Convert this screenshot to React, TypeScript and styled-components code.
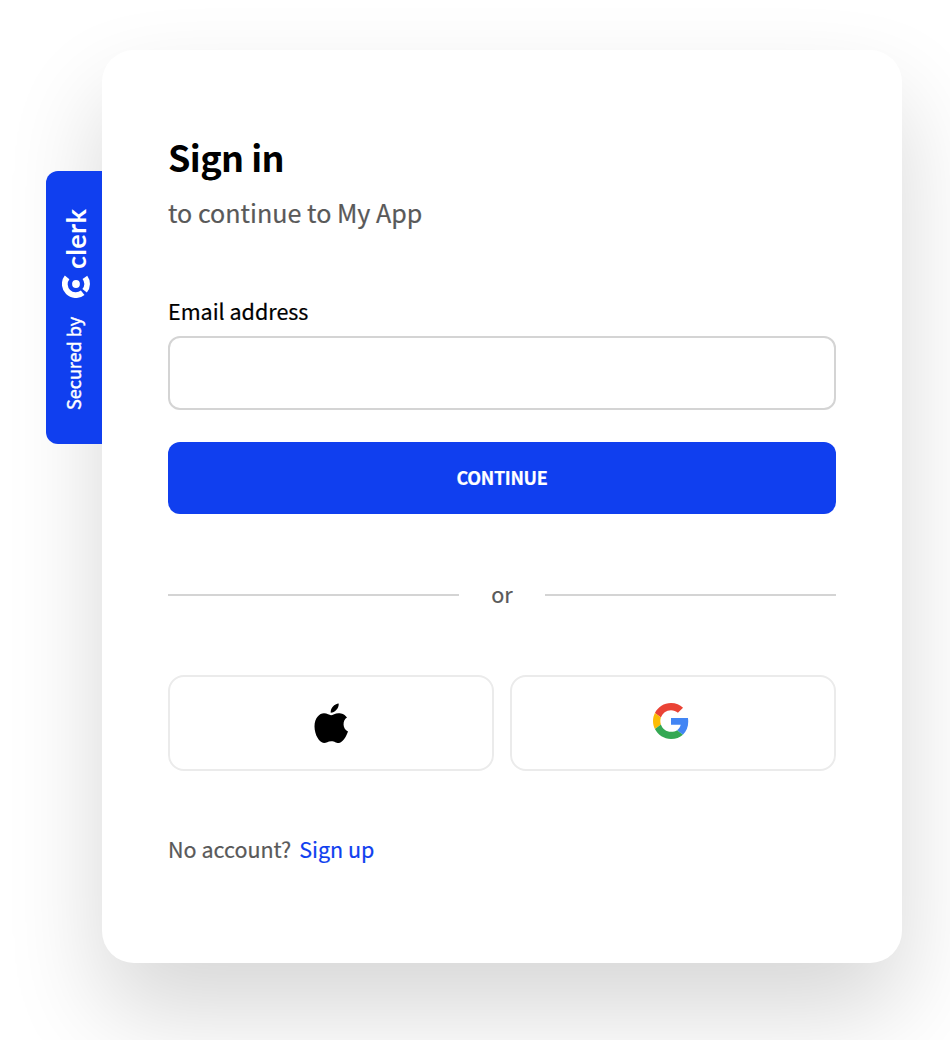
import React from "react";
import styled, { createGlobalStyle } from "styled-components";

const GlobalStyle = createGlobalStyle`
  *, *::before, *::after { box-sizing: border-box; }
  body {
    margin: 0;
    background: #fff;
    overflow: hidden;
    font-family: "Noto Sans CJK SC", "Open Sans", sans-serif;
    -webkit-text-stroke: 0.2px currentColor;
  }
`;

const Page = styled.main`
  display: flex;
  align-items: flex-start;
  height: 1040px;
  padding: 50px 0 0 46px;
  overflow: hidden;
`;

const SecuredTab = styled.aside`
  position: relative;
  z-index: 1;
  display: flex;
  flex-direction: row-reverse;
  align-items: center;
  justify-content: flex-end;
  width: 56px;
  height: 273px;
  margin-top: 121px;
  padding: 35px 0 34px;
  background: #103fef;
  border-radius: 12px 0 0 12px;
  color: #fff;
  writing-mode: vertical-rl;
`;

const TabContent = styled.div`
  display: flex;
  align-items: center;
  width: 56px;
  height: 204px;
  transform: rotate(180deg);
`;

const SecuredText = styled.span`
  margin-left: 2px;
  font-size: 18px;
  line-height: 24px;
  white-space: nowrap;
  -webkit-text-stroke: 0.4px currentColor;
`;

const TabLogo = styled.svg`
  display: block;
  flex: none;
  width: 28px;
  height: 24px;
  margin: 19px 4px 0 0;
  transform: rotate(180deg);
`;

const Wordmark = styled.span`
  margin: 5px 4px 0 0;
  font-family: Lato, sans-serif;
  font-size: 27px;
  font-weight: 700;
  letter-spacing: 0.3px;
  line-height: 28px;
  -webkit-text-stroke: 0;
`;

const Card = styled.section`
  display: flex;
  flex-direction: column;
  width: 800px;
  height: 913px;
  flex: none;
  padding: 86px 66px 0;
  background: #fff;
  border-radius: 32px;
  box-shadow: 0 48px 96px rgba(0, 0, 0, 0.16);
`;

const Title = styled.h1`
  margin: 0;
  font-size: 36px;
  font-weight: 600;
  letter-spacing: -0.6px;
  line-height: 40px;
  color: #000;
  -webkit-text-stroke: 0;
`;

const Subtitle = styled.p`
  margin: 21px 0 0;
  font-size: 25.1px;
  line-height: 30px;
  color: #595959;
`;

const Field = styled.label`
  display: flex;
  flex-direction: column;
  gap: 12px;
  margin-top: 71px;
  font-size: 21.5px;
  line-height: 26px;
  color: #000;
`;

const Input = styled.input`
  width: 100%;
  height: 74px;
  padding: 0 24px;
  border: 2px solid #d4d4d4;
  border-radius: 12px;
  background: #fff;
  font: inherit;
  outline: none;
`;

const ContinueButton = styled.button`
  height: 72px;
  margin-top: 32px;
  padding: 0 0 2px;
  border: 0;
  border-radius: 12px;
  background: #103fef;
  color: #fff;
  font-family: inherit;
  font-size: 18px;
  font-weight: 600;
  letter-spacing: -0.35px;
  line-height: 24px;
`;

const Divider = styled.div`
  display: flex;
  align-items: center;
  gap: 32px;
  height: 26px;
  margin-top: 68px;
  color: #595959;

  &::before,
  &::after {
    content: "";
    flex: 1;
    height: 2px;
    background: #d4d4d4;
  }
`;

const DividerText = styled.span`
  padding-bottom: 2px;
  font-size: 21.6px;
  line-height: 24px;
`;

const Providers = styled.div`
  display: grid;
  grid-template-columns: 1fr 1fr;
  gap: 16px;
  margin-top: 67px;
`;

const ProviderButton = styled.button`
  display: flex;
  align-items: center;
  justify-content: center;
  height: 96px;
  padding: 0;
  border: 2px solid #ebebeb;
  border-radius: 16px;
  background: #fff;
`;

const GoogleLogo = styled.svg`
  width: 36px;
  height: 36px;
  margin: 0 4px 4px 0;
`;

const Footer = styled.p`
  display: flex;
  gap: 8px;
  margin: 64px 0 0;
  font-size: 21.5px;
  line-height: 28px;
  color: #595959;
`;

const SignUpLink = styled.a`
  color: #103fef;
  text-decoration: none;
`;

const AppleIcon = () => (
  <svg width="34" height="41" viewBox="0 0 34 41" aria-hidden="true">
    <path d="M17 12.200c1.600 0 4.300-2 7.500-2 1.200 0 5.600.1 8.500 4.300-4.900 3-4.500 11.500 1 14-1.600 4.600-5.300 11.500-9.500 11.500-2.700 0-3.600-1.800-7.200-1.800-3.600 0-4.700 1.800-7.300 1.800C5.500 40 .5 32 .5 23.600c0-8.600 5-13.300 9.500-13.300 3.200 0 5.300 1.900 7 1.900zM16.700 9.800C16.400 5 20.500.8 24.700.5c.4 4.700-3.700 9.200-8 9.300z" fill="#000" />
  </svg>
);

const GoogleIcon = () => (
  <GoogleLogo viewBox="0 0 48 48" aria-hidden="true">
    <path fill="#EA4335" d="M24 9.500c3.540 0 6.710 1.220 9.210 3.600l6.850-6.850C35.900 2.380 30.470 0 24 0 14.620 0 6.510 5.380 2.560 13.220l7.980 6.190C12.430 13.720 17.740 9.500 24 9.500z" />
    <path fill="#4285F4" d="M46.980 24.550c0-1.570-.15-3.090-.38-4.550H24v9.020h12.940c-.58 2.960-2.260 5.480-4.780 7.180l7.730 6c4.510-4.180 7.090-10.360 7.090-17.650z" />
    <path fill="#FBBC05" d="M10.530 28.590c-.48-1.450-.76-2.990-.76-4.590s.27-3.140.76-4.590l-7.980-6.190C.92 16.460 0 20.120 0 24s.92 7.540 2.560 10.780z" />
    <path fill="#34A853" d="M24 48c6.480 0 11.930-2.130 15.890-5.810l-7.730-6c-2.150 1.450-4.920 2.300-8.160 2.300-6.260 0-11.570-4.220-13.470-9.910l-7.980 6.190C6.510 42.620 14.620 48 24 48z" />
  </GoogleLogo>
);

const ClerkMark = () => (
  <TabLogo viewBox="0 0 28 24" aria-hidden="true">
    <g fill="none" stroke="#fff" strokeWidth="5.800">
      <path d="M5.100 3.400A11 11 0 0 0 20.700 18.700" />
      <path d="M22.600 16.800A11 11 0 0 0 22.900 3.400" />
    </g>
    <circle cx="14" cy="10" r="3.900" fill="#fff" />
  </TabLogo>
);

export default function App() {
  return (
    <>
      <GlobalStyle />
      <Page>
        <SecuredTab>
          <TabContent>
            <SecuredText>Secured by</SecuredText>
            <ClerkMark />
            <Wordmark>clerk</Wordmark>
          </TabContent>
        </SecuredTab>
        <Card>
          <Title>Sign in</Title>
          <Subtitle>to continue to My App</Subtitle>
          <Field>
            Email address
            <Input type="email" />
          </Field>
          <ContinueButton type="button">CONTINUE</ContinueButton>
          <Divider>
            <DividerText>or</DividerText>
          </Divider>
          <Providers>
            <ProviderButton type="button" aria-label="Apple">
              <AppleIcon />
            </ProviderButton>
            <ProviderButton type="button" aria-label="Google">
              <GoogleIcon />
            </ProviderButton>
          </Providers>
          <Footer>
            No account? <SignUpLink href="#">Sign up</SignUpLink>
          </Footer>
        </Card>
      </Page>
    </>
  );
}
